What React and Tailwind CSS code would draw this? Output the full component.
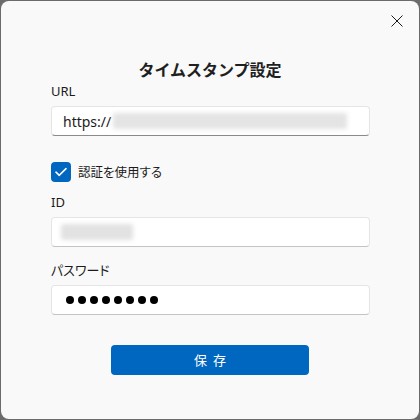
export default function App() {
  const font = { fontFamily: '"Noto Sans", "Noto Sans CJK JP", sans-serif' };
  return (
    <div className="w-[420px] h-[420px] bg-[#6b6b6b] p-px" style={font}>
      <div className="relative w-full h-full bg-[#f9f9f9] rounded-[8px] flex flex-col pt-[57px]">
        <button className="absolute right-[15px] top-[13px] w-[14px] h-[14px] flex items-center justify-center">
          <svg width="12" height="12" viewBox="0 0 12 12" fill="none">
            <path d="M0.5 0.5L11.5 11.5M11.5 0.5L0.5 11.5" stroke="#1b1b1b" strokeWidth="1" />
          </svg>
        </button>
        <div className="text-center text-[16px] leading-[23px] font-bold text-[#1f1f1f]" style={{ fontFamily: '"Noto Sans CJK JP", sans-serif' }}>
          タイムスタンプ設定
        </div>
        <div className="ml-[50px] w-[319px] flex flex-col">
          <div className="h-[20px] leading-[20px] text-[13px] text-[#1b1b1b]">URL</div>
          <div className="mt-[5px] h-[30px] bg-white rounded-[4px] border border-[#e5e5e5] border-b-[#8a8a8a] flex items-center pl-[11px] text-[14px] text-[#1b1b1b]">
            <span>https://</span>
            <span className="ml-[2px] w-[234px] h-[16px] bg-[#e4e4e4] blur-[2px] rounded-[2px]"></span>
          </div>
          <div className="mt-[26px] flex items-center h-[20px]">
            <div className="w-[20px] h-[20px] rounded-[4px] bg-[#0067c0] flex items-center justify-center">
              <svg width="12" height="10" viewBox="0 0 12 10" fill="none">
                <path d="M1 5.2L4.3 8.3L11 1.6" stroke="white" strokeWidth="1.6" strokeLinecap="round" strokeLinejoin="round" />
              </svg>
            </div>
            <span className="ml-[7px] text-[12.5px] text-[#1b1b1b] [font-feature-settings:'palt']" style={{ fontFamily: '"Noto Sans CJK JP", sans-serif' }}>認証を使用する</span>
          </div>
          <div className="mt-[10px] h-[20px] leading-[20px] text-[13px] text-[#1b1b1b]">ID</div>
          <div className="mt-[5px] h-[30px] bg-white rounded-[4px] border border-[#e5e5e5] border-b-[#c4c4c4] flex items-center pl-[9px]">
            <span className="w-[72px] h-[16px] bg-[#e2e2e2] blur-[2px] rounded-[2px]"></span>
          </div>
          <div className="mt-[13px] h-[20px] leading-[20px] text-[13px] text-[#1b1b1b] [font-feature-settings:'palt']" style={{ fontFamily: '"Noto Sans CJK JP", sans-serif' }}>パスワード</div>
          <div className="mt-[5px] h-[30px] bg-white rounded-[4px] border border-[#e5e5e5] border-b-[#c4c4c4] flex items-center pl-[14px] gap-[4px]">
            {Array.from({ length: 8 }).map((_, i) => (
              <span key={i} className="w-[8px] h-[8px] rounded-full bg-black"></span>
            ))}
          </div>
          <button className="mt-[30px] ml-[60px] w-[198px] h-[30px] rounded-[4px] bg-[#0067c0] text-white text-[13px] tracking-[6px] flex items-center justify-center pl-[6px]" style={{ fontFamily: '"Noto Sans CJK JP", sans-serif' }}>
            保存
          </button>
        </div>
      </div>
    </div>
  );
}
